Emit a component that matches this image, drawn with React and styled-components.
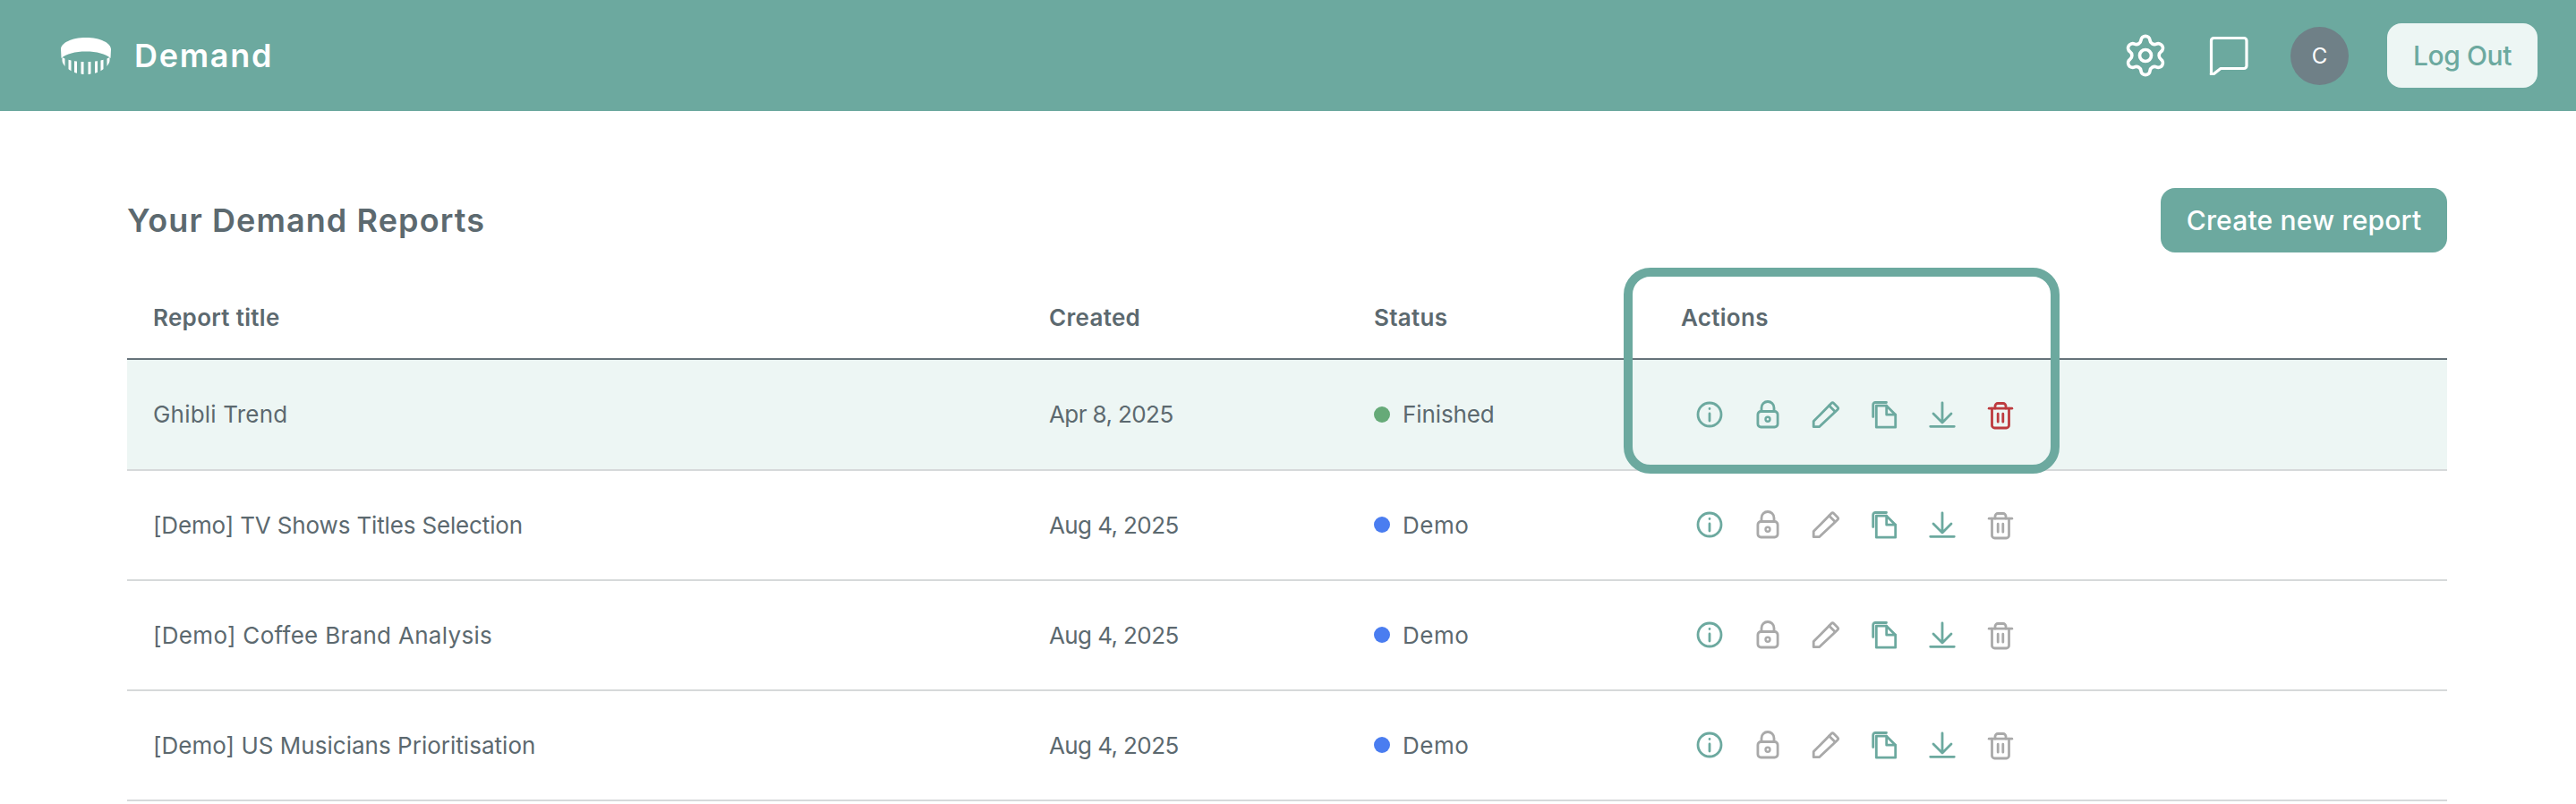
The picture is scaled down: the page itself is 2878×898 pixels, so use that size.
import React from "react";
import styled, { createGlobalStyle } from "styled-components";
import { Settings } from "lucide-react";

const GREEN = "#6ca99f";
const MINT = "#edf6f4";
const INK = "#5c696f";
const GREY = "#a9a9a9";
const RED = "#bd3b3f";

const Global = createGlobalStyle`
  html, body { margin: 0; padding: 0; background: #fff; }
  body { font-family: Inter, "Open Sans", sans-serif; color: ${INK}; overflow: hidden; }
`;

const Page = styled.div`
  width: 2878px;
  height: 898px;
  overflow: hidden;
`;

const TopBar = styled.header`
  height: 124px;
  background: ${GREEN};
  display: flex;
  align-items: center;
  justify-content: space-between;
  padding: 0 43px 0 68px;
`;

const Brand = styled.div`
  display: flex;
  align-items: center;
  gap: 26px;
  color: #fff;
  font-size: 36px;
  font-weight: 600;
  letter-spacing: 1.7px;
`;

const Toolbar = styled.div`
  display: flex;
  align-items: center;
  gap: 45px;
`;

const ToolIcon = styled.span`
  display: flex;
  color: #fff;
`;

const Avatar = styled.div`
  width: 65px;
  height: 65px;
  margin: 0 -2px 0 2px;
  border-radius: 50%;
  background: #6f8087;
  color: #fff;
  font-size: 24px;
  display: flex;
  align-items: center;
  justify-content: center;
`;

const Button = styled.button`
  height: 72px;
  border: 0;
  border-radius: 16px;
  padding: 0;
  width: ${(p) => p.$w}px;
  background: ${(p) => (p.$light ? MINT : GREEN)};
  color: ${(p) => (p.$light ? GREEN : "#fff")};
  font-family: inherit;
  font-size: 30px;
  font-weight: 500;
  letter-spacing: ${(p) => p.$ls || 0}px;
`;

const Main = styled.main`
  padding: 86px 144px 0 142px;
`;

const TitleBar = styled.div`
  height: 72px;
  display: flex;
  align-items: center;
  justify-content: space-between;
`;

const Title = styled.h1`
  margin: 0;
  font-size: 36px;
  font-weight: 600;
  color: ${INK};
  letter-spacing: 1.1px;
`;

const Table = styled.div`
  position: relative;
`;

const Row = styled.div`
  display: grid;
  grid-template-columns: 1001px 363px 343px 1fr;
  align-items: center;
  box-sizing: border-box;
  height: ${(p) => (p.$head ? 120 : p.$active ? 124 : 123)}px;
  padding: ${(p) => (p.$head ? "26px 0 0" : "0 0 1px")};
  border-bottom: 2px solid ${(p) => (p.$head ? "#66737a" : "#d6d9da")};
  background: ${(p) => (p.$active ? MINT : "transparent")};
  font-size: 26px;
  font-weight: ${(p) => (p.$head ? 600 : 400)};
`;

const Cell = styled.div`
  padding-left: 29px;
  letter-spacing: ${(p) => (p.$ls === undefined ? 0.3 : p.$ls)}px;
`;

const StatusCell = styled(Cell)`
  display: flex;
  align-items: center;
  gap: 14px;
  letter-spacing: ${(p) => p.$ls}px;
`;

const Dot = styled.span`
  width: 18px;
  height: 18px;
  border-radius: 50%;
  background: ${(p) => p.$color};
`;

const Actions = styled.div`
  display: flex;
  align-items: center;
  gap: 29px;
  padding-left: 43px;
`;

const Glyph = styled.svg`
  width: 36px;
  height: 36px;
  flex: none;
  fill: none;
  stroke: ${(p) => p.$color};
  stroke-width: 2.8;
  stroke-linecap: round;
  stroke-linejoin: round;
`;

const Highlight = styled.div`
  position: absolute;
  left: 1672px;
  top: 17px;
  width: 487px;
  height: 230px;
  box-sizing: border-box;
  border: 10px solid ${GREEN};
  border-radius: 30px;
  pointer-events: none;
`;

const Logo = () => (
  <svg width="56" height="41" viewBox="0 0 56 41" style={{ display: "block" }}>
    <defs>
      <clipPath id="ring">
        <path d="M0 20 C0 32 12 41 28 41 C44 41 56 32 56 20 L56 21 C50 25 40 27 28 27 C16 27 6 25 0 21 Z" />
      </clipPath>
    </defs>
    <path
      d="M0 13 C0 6 12 0 28 0 C44 0 56 6 56 13 L55.500 23 C50 18 40 15.500 28 15.500 C16 15.500 6 18 0.500 23 Z"
      fill="#fff"
    />
    <g clipPath="url(#ring)" fill="#fff">
      {[1.5, 8.5, 15, 22.5, 30.5, 38, 44.5, 51.5].map((x) => (
        <rect key={x} x={x} y="14" width="3" height="28" />
      ))}
    </g>
  </svg>
);

const Chat = () => (
  <svg width="44" height="44" viewBox="0 0 44 44" fill="none" stroke="#fff" strokeWidth="3.2" strokeLinejoin="round">
    <path d="M5 2.500h34a3 3 0 0 1 3 3v28a3 3 0 0 1-3 3H13l-8 6.300a1.200 1.200 0 0 1-2.500-1V5.500a3 3 0 0 1 2.500-3z" />
  </svg>
);

const Info = ({ c }) => (
  <Glyph viewBox="0 0 36 36" $color={c}>
    <circle cx="18" cy="18" r="13" />
    <path d="M18 17v8M18 11.500v.1" />
  </Glyph>
);
const Lock = ({ c }) => (
  <Glyph viewBox="0 0 36 36" $color={c}>
    <rect x="6.900" y="14.500" width="22.200" height="17.500" rx="3.500" />
    <path d="M11 14.500v-4a7 7 0 0 1 14 0v4" />
    <circle cx="18" cy="23.300" r="2.500" strokeWidth="2.400" />
  </Glyph>
);
const Pencil = ({ c }) => (
  <Glyph viewBox="1 0 36 36" $color={c}>
    <path d="M5.200 31.700V25.500L25 5.500a2 2 0 0 1 2.800 0L32 9.700a2 2 0 0 1 0 2.800L11.500 31.700z" />
    <path d="M22.500 8L29 14.500" />
  </Glyph>
);
const Copy = ({ c }) => (
  <Glyph viewBox="0 0 36 36" $color={c}>
    <path d="M5.700 20.500V7a2.500 2.500 0 0 1 2.500-2.500H20.500" />
    <path d="M9.300 8.200H20.700L30.700 18.200V32.200H9.300z" />
    <path d="M20.700 8.200V18.200H30.700" />
  </Glyph>
);
const Download = ({ c }) => (
  <Glyph viewBox="0 0 36 36" $color={c}>
    <path d="M18 4.800V26.500M8 17L18 27L28 17M4.700 31.300H31.300" />
  </Glyph>
);
const Trash = ({ c }) => (
  <Glyph viewBox="0 0 36 36" $color={c}>
    <path d="M5.200 11.200H30.800" />
    <path d="M8.500 11.200V30a3 3 0 0 0 3 3h13a3 3 0 0 0 3-3V11.200" />
    <path d="M12 11V8.500a3 3 0 0 1 3-3h6a3 3 0 0 1 3 3V11" />
    <path d="M15.200 17.200v9M20.800 17.200v9" />
  </Glyph>
);

const rows = [
  { title: "Ghibli Trend", ls: 0.2, date: "Apr 8, 2025", status: "Finished", dot: "#66aa78", statusLs: -0.1, active: true },
  { title: "[Demo] TV Shows Titles Selection", ls: -0.15, date: "Aug 4, 2025", status: "Demo", dot: "#4a7df0", statusLs: 0.5 },
  { title: "[Demo] Coffee Brand Analysis", ls: 0.3, date: "Aug 4, 2025", status: "Demo", dot: "#4a7df0", statusLs: 0.5 },
  { title: "[Demo] US Musicians Prioritisation", ls: 0.02, date: "Aug 4, 2025", status: "Demo", dot: "#4a7df0", statusLs: 0.5 },
];

export default function App() {
  return (
    <Page>
      <Global />
      <TopBar>
        <Brand>
          <Logo />
          Demand
        </Brand>
        <Toolbar>
          <ToolIcon>
            <Settings size={52} strokeWidth={1.7} />
          </ToolIcon>
          <ToolIcon>
            <Chat />
          </ToolIcon>
          <Avatar>C</Avatar>
          <Button $light $w={168} $ls={-0.4}>Log Out</Button>
        </Toolbar>
      </TopBar>
      <Main>
        <TitleBar>
          <Title>Your Demand Reports</Title>
          <Button $w={320} $ls={0.2}>Create new report</Button>
        </TitleBar>
        <Table>
          <Row $head>
            <Cell>Report title</Cell>
            <Cell>Created</Cell>
            <Cell>Status</Cell>
            <Cell>Actions</Cell>
          </Row>
          {rows.map((r) => (
            <Row key={r.title} $active={r.active}>
              <Cell $ls={r.ls}>{r.title}</Cell>
              <Cell $ls={-0.6}>{r.date}</Cell>
              <StatusCell $ls={r.statusLs}>
                <Dot $color={r.dot} />
                {r.status}
              </StatusCell>
              <Actions>
                <Info c={GREEN} />
                <Lock c={r.active ? GREEN : GREY} />
                <Pencil c={r.active ? GREEN : GREY} />
                <Copy c={GREEN} />
                <Download c={GREEN} />
                <Trash c={r.active ? RED : GREY} />
              </Actions>
            </Row>
          ))}
          <Highlight />
        </Table>
      </Main>
    </Page>
  );
}
